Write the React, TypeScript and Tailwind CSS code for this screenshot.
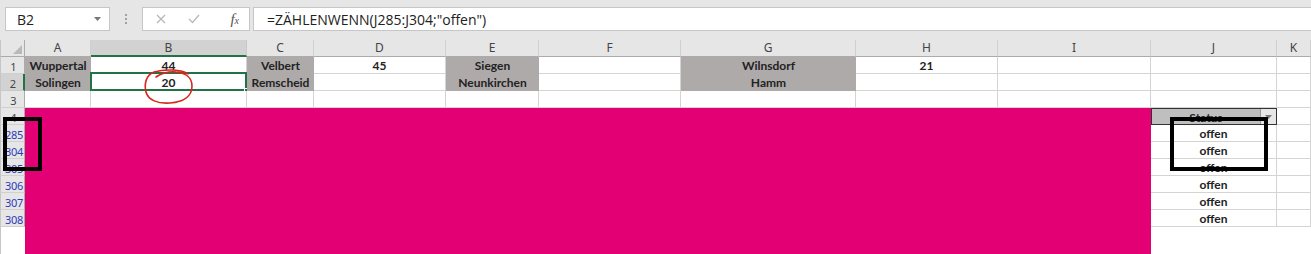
import React from "react";

type Cell = { t?: string; gray?: boolean };
type Row = { n: string; blue?: boolean; cells: Record<string, Cell> };

const COLS = ["A", "B", "C", "D", "E", "F", "G", "H", "I", "J", "K"];
const GRID =
  "grid grid-cols-[25px_66px_156px_67px_132px_93px_142px_175px_142px_153px_126px_1fr]";

const rows: Row[] = [
  {
    n: "1",
    cells: {
      A: { t: "Wuppertal", gray: true },
      B: { t: "44" },
      C: { t: "Velbert", gray: true },
      D: { t: "45" },
      E: { t: "Siegen", gray: true },
      G: { t: "Wilnsdorf", gray: true },
      H: { t: "21" },
    },
  },
  {
    n: "2",
    cells: {
      A: { t: "Solingen", gray: true },
      B: { t: "20" },
      C: { t: "Remscheid", gray: true },
      E: { t: "Neunkirchen", gray: true },
      G: { t: "Hamm", gray: true },
    },
  },
  { n: "3", cells: {} },
];

const dataRows = ["285", "304", "305", "306", "307", "308"];

function FormulaBar() {
  return (
    <div className="h-[40px] bg-[#e6e6e6] flex items-start pt-[7px] pl-[5px] font-['Open_Sans',sans-serif]">
      <div className="w-[105px] h-[24px] bg-white border border-[#c6c6c6] flex items-center justify-between pl-[11px] pr-[8px] text-[14px] text-[#222]">
        <span>B2</span>
        <svg width="7" height="4" viewBox="0 0 7 4">
          <path d="M0 0 L7 0 L3.5 4 Z" fill="#777" />
        </svg>
      </div>
      <div className="w-[32px] h-[24px] flex flex-col items-center justify-center gap-[2px]">
        <span className="w-[2px] h-[2px] bg-[#a0a0a0]" />
        <span className="w-[2px] h-[2px] bg-[#a0a0a0]" />
        <span className="w-[2px] h-[2px] bg-[#a0a0a0]" />
      </div>
      <div className="w-[108px] h-[24px] bg-white border border-[#c6c6c6] flex items-center pl-[13px] pr-[10px]">
        <svg width="10" height="10" viewBox="0 0 10 10">
          <path d="M1 1 L9 9 M9 1 L1 9" stroke="#b8b8b8" strokeWidth="1.3" />
        </svg>
        <svg width="12" height="10" viewBox="0 0 12 10" className="ml-[22px]">
          <path d="M1 5 L4.5 8.5 L11 1" stroke="#b8b8b8" strokeWidth="1.3" fill="none" />
        </svg>
        <span className="ml-auto font-['Liberation_Serif',serif] italic text-[15px] text-[#555] leading-none">
          f<span className="text-[10px]">x</span>
        </span>
      </div>
      <div className="flex-1 h-[24px] ml-[3px] bg-white border border-[#c6c6c6] border-r-0 flex items-center pl-[13px] text-[14px] text-[#222]">
        =ZÄHLENWENN(J285:J304;"offen")
      </div>
    </div>
  );
}

function ColumnHeader() {
  return (
    <div className={`${GRID} h-[17px] bg-[#e6e6e6] text-[12px] text-[#444] font-['Noto_Sans',sans-serif]`}>
      <div className="border-r border-b border-[#ababab] border-l border-l-[#c6c6c6] flex items-end justify-end p-[2px]">
        <svg width="9" height="9" viewBox="0 0 9 9">
          <path d="M9 0 L9 9 L0 9 Z" fill="#b9b9b9" />
        </svg>
      </div>
      {COLS.map((c) =>
        c === "B" ? (
          <div
            key={c}
            className="bg-[#d2d2d2] border-r border-[#c8c8c8] border-b-2 border-b-[#217346] flex items-center justify-center leading-none"
          >
            {c}
          </div>
        ) : (
          <div
            key={c}
            className="border-r border-[#d0d0d0] border-b border-b-[#ababab] flex items-center justify-center leading-none"
          >
            {c}
          </div>
        )
      )}
    </div>
  );
}

function RowHead({ n, blue, active }: { n: string; blue?: boolean; active?: boolean }) {
  return (
    <div
      className={
        active
          ? "bg-[#d2d2d2] border-b border-[#c8c8c8] border-r-2 border-r-[#217346] border-l border-l-[#c6c6c6] flex items-center justify-center pt-[2px] pl-[2px] text-[11px] text-[#444] leading-none"
          : blue
          ? "bg-[#e6e6e6] border-b border-[#d0d0d0] border-r border-r-[#ababab] border-l border-l-[#c6c6c6] flex items-center justify-center pt-[2px] pl-[3px] text-[11px] text-[#2c3cb8] leading-none tracking-[-0.3px]"
          : "bg-[#e6e6e6] border-b border-[#d0d0d0] border-r border-r-[#ababab] border-l border-l-[#c6c6c6] flex items-center justify-center pt-[2px] pl-[2px] text-[11px] text-[#444] leading-none"
      }
    >
      {n}
    </div>
  );
}

function SheetRow({ row }: { row: Row }) {
  return (
    <div className={`${GRID} h-[17px] font-['Noto_Sans',sans-serif]`}>
      <RowHead n={row.n} active={row.n === "2"} />
      {COLS.map((c) => {
        const cell = row.cells[c] || {};
        const selected = row.n === "2" && c === "B";
        return (
          <div
            key={c}
            className={
              cell.gray
                ? "relative bg-[#aeaaaa] border-b border-[#aeaaaa] flex items-center justify-center pt-[2px] font-['Lato',sans-serif] font-bold text-[12px] text-[#222] leading-none"
                : "relative bg-white border-r border-b border-[#d4d4d4] flex items-center justify-center pt-[2px] font-['Lato',sans-serif] font-bold text-[12px] text-[#222] leading-none"
            }
          >
            {cell.t}
            {selected && (
              <>
                <div className="absolute -left-px -top-[2px] -right-px -bottom-px border-2 border-[#217346]" />
                <div className="absolute -right-[4px] -bottom-[4px] w-[6px] h-[6px] bg-[#217346] border border-white" />
              </>
            )}
          </div>
        );
      })}
    </div>
  );
}

function StatusRow() {
  return (
    <div className={`${GRID} h-[17px] font-['Noto_Sans',sans-serif]`}>
      <RowHead n="4" />
      {COLS.map((c) =>
        c === "J" ? (
          <div key={c} className="flex border border-[#333] bg-[#bfbfbf]">
            <div className="flex-1 flex items-center justify-center pt-[2px] font-['Lato',sans-serif] font-bold text-[12px] text-[#222] leading-none">
              Status
            </div>
            <div className="w-[16px] bg-[#e6e6e6] border-l border-[#999] flex items-center justify-center">
              <svg width="7" height="4" viewBox="0 0 7 4">
                <path d="M0 0 L7 0 L3.5 4 Z" fill="#777" />
              </svg>
            </div>
          </div>
        ) : (
          <div key={c} className="bg-white border-r border-b border-[#d4d4d4]" />
        )
      )}
    </div>
  );
}

function DataRow({ n }: { n: string }) {
  return (
    <div className={`${GRID} h-[17px] font-['Noto_Sans',sans-serif]`}>
      <RowHead n={n} blue />
      {COLS.map((c) => (
        <div
          key={c}
          className="bg-white border-r border-b border-[#d4d4d4] flex items-center justify-center pt-[2px] font-['Lato',sans-serif] font-bold text-[12px] text-[#222] leading-none"
        >
          {c === "J" ? "offen" : ""}
        </div>
      ))}
    </div>
  );
}

export default function App() {
  return (
    <div className="relative w-[1311px] h-[254px] overflow-hidden bg-white flex flex-col">
      <FormulaBar />
      <ColumnHeader />
      {rows.map((r) => (
        <SheetRow key={r.n} row={r} />
      ))}
      <StatusRow />
      {dataRows.map((n) => (
        <DataRow key={n} n={n} />
      ))}
      <div className="flex-1 bg-white border-l border-[#c6c6c6]" />

      {/* redaction block */}
      <div className="absolute left-[25px] top-[108px] w-[1126px] h-[146px] bg-[#e20074]" />

      {/* hand-drawn markers */}
      <div className="absolute left-[3px] top-[117px] w-[39px] h-[54px] border-4 border-black" />
      <div className="absolute left-[1170px] top-[117px] w-[98px] h-[54px] border-4 border-black" />
      <svg className="absolute left-[142px] top-[68px]" width="54" height="38" viewBox="0 0 54 38">
        <path
          d="M46 6 C40 1 22 1 12 4 C4 7 2 16 4 24 C6 32 16 36 28 35 C42 34 50 28 50 18 C50 10 44 5 34 4 C26 3 18 6 14 9"
          stroke="#d9261c"
          strokeWidth="1.6"
          fill="none"
          strokeLinecap="round"
        />
      </svg>
    </div>
  );
}
